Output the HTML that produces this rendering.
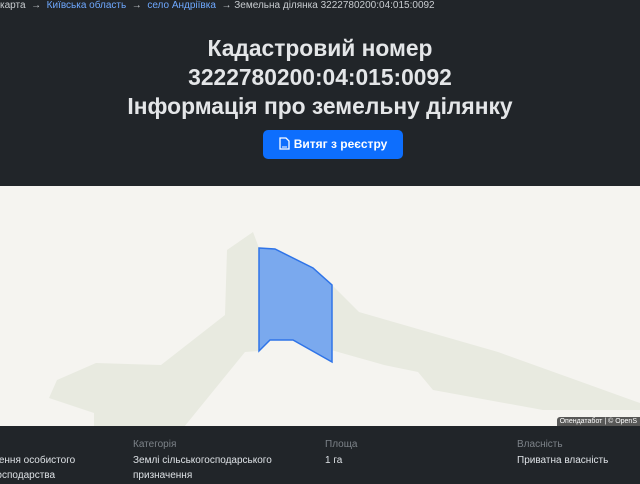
<!DOCTYPE html>
<html><head><meta charset="utf-8"><style>
*{margin:0;padding:0;box-sizing:border-box}
body{width:640px;height:480px;overflow:hidden;background:#212529;font-family:"Liberation Sans","DejaVu Sans",sans-serif;color:#dee2e6;position:relative}
.bc{position:absolute;top:0;left:0;height:14px;font-size:10px;line-height:12px;white-space:nowrap;color:#c8ccd0}
.bc a{color:#6ea8fe;text-decoration:none}
h1{position:absolute;top:34px;left:0;width:640px;text-align:center;font-size:22.8px;font-weight:bold;line-height:29px;color:#e4e6e8}
.btn{position:absolute;left:263px;top:130px;width:140px;height:29px;background:#0d6efd;border-radius:5px;color:#fff;font-size:12px;font-weight:bold;line-height:29px;text-align:center}
.map{position:absolute;left:0;top:186px;width:640px;height:240px;background:#f5f4f0}
.attr{position:absolute;right:0;bottom:0;background:rgba(60,60,60,.85);color:#fff;font-size:7px;padding:1px 3px;border-radius:3px 0 0 0}
.col{position:absolute;top:437px;font-size:10px;line-height:15.5px}
.col .l{color:#7d8389}
</style></head><body>
<div class="bc">карта &nbsp;→&nbsp; <a>Київська область</a> &nbsp;→&nbsp; <a>село Андріївка</a> &nbsp;→ Земельна ділянка 3222780200:04:015:0092</div>
<h1>Кадастровий номер<br>3222780200:04:015:0092<br>Інформація про земельну ділянку</h1>
<div class="btn"><svg width="11" height="13" viewBox="0 0 11 13" style="vertical-align:-2px;margin-right:4px"><path d="M1 1h6l3 3v8H1z" fill="none" stroke="#fff" stroke-width="1.3"/><path d="M3 10h5" stroke="#fff" stroke-width="1"/></svg>Витяг з реєстру</div>
<div class="map">
<svg width="640" height="240" viewBox="0 186 640 240" style="position:absolute;left:0;top:0">
<path d="M253 232L227 250L225 315L161 365L96 363L57 380L49 398L94 413L94 427L184 427L245 352L259 351L259 248ZM332 285L359 312L498 352L640 403L640 410L543 410L433 390L418 372L384 365L331 350Z" fill="#e8eae0"/>
<path d="M259 248L275 249L313 268L332 285L332 362L293 340L270 340L259 351Z" fill="#7aa9ee" stroke="#2f74e8" stroke-width="1.5"/>
</svg>
<div class="attr">Опендатабот | © OpenS</div>
</div>
<div class="col" style="left:-7px"><div class="l">я</div>дення особистого<br>господарства</div>
<div class="col" style="left:133px"><div class="l">Категорія</div>Землі сільськогосподарського<br>призначення</div>
<div class="col" style="left:325px"><div class="l">Площа</div>1 га</div>
<div class="col" style="left:517px"><div class="l">Власність</div>Приватна власність</div>
</body></html>
